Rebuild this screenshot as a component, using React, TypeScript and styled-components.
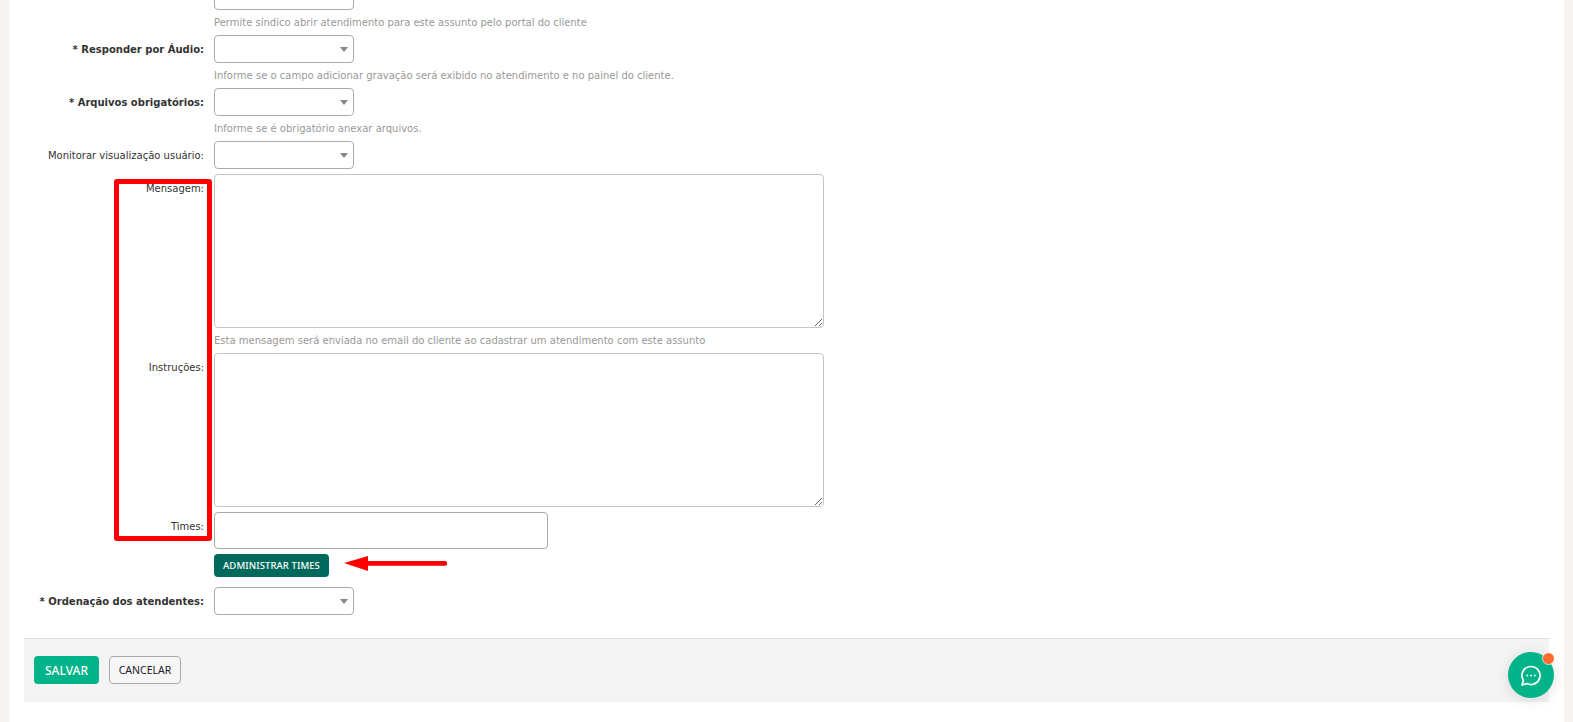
import React from "react";
import styled, { createGlobalStyle } from "styled-components";

const GlobalStyle = createGlobalStyle`
  html, body {
    margin: 0;
    padding: 0;
    height: 722px;
    overflow: hidden;
    background: #f6f3f1;
  }
`;

const Page = styled.div`
  position: relative;
  width: 1555px;
  height: 722px;
  margin-left: 9px;
  background: #fff;
  overflow: hidden;
  font-family: "DejaVu Sans", Verdana, sans-serif;
`;

const Form = styled.div`
  display: flex;
  flex-direction: column;
  margin-top: -18px;
`;

const Row = styled.div<{ $gap?: number }>`
  display: flex;
  align-items: flex-start;
  margin-bottom: ${(p) => p.$gap ?? 0}px;
`;

const Label = styled.label<{ $required?: boolean; $top?: number }>`
  width: 205px;
  flex: none;
  padding-top: ${(p) => p.$top ?? 8}px;
  padding-right: 10px;
  box-sizing: border-box;
  text-align: right;
  font-size: 10px;
  line-height: 13px;
  white-space: nowrap;
  color: #333;
  font-weight: ${(p) => (p.$required ? 700 : 400)};
`;

const Field = styled.div`
  display: flex;
  flex-direction: column;
  align-items: flex-start;
`;

const Select = styled.div`
  position: relative;
  width: 140px;
  height: 28px;
  box-sizing: border-box;
  border: 1px solid #aaa;
  border-radius: 4px;
  background: #fff;

  &::after {
    content: "";
    position: absolute;
    right: 5px;
    top: 11px;
    border-left: 4.5px solid transparent;
    border-right: 4.5px solid transparent;
    border-top: 5px solid #888;
  }
`;

const Help = styled.div`
  height: 25px;
  line-height: 25px;
  font-size: 10px;
  color: #999;
  white-space: nowrap;
`;

const TextArea = styled.textarea`
  display: block;
  width: 610px;
  height: 154px;
  margin: 0;
  padding: 0;
  box-sizing: border-box;
  border: 1px solid #c4c4c4;
  border-radius: 4px;
  background: #fff;
  outline: none;
`;

const TagsInput = styled.div`
  width: 334px;
  height: 37px;
  box-sizing: border-box;
  border: 1px solid #aaa;
  border-radius: 4px;
  background: #fff;
`;

const TealButton = styled.button`
  width: 115px;
  height: 23px;
  margin: 5px 0 10px;
  padding: 0;
  border: 0;
  border-radius: 4px;
  background: #00695c;
  color: #fff;
  font-family: "Noto Sans", sans-serif;
  font-size: 9.5px;
  font-weight: 500;
  letter-spacing: 0.1px;
`;

const Footer = styled.div`
  display: flex;
  align-items: flex-start;
  gap: 10px;
  margin: 23px 0 0 15px;
  width: 1525px;
  height: 64px;
  box-sizing: border-box;
  padding: 17px 10px 0;
  border-top: 1px solid #ddd;
  background: #f4f4f4;
`;

const SaveButton = styled.button`
  width: 65px;
  height: 28px;
  padding: 0;
  border: 0;
  border-radius: 4px;
  background: #00b388;
  color: #fff;
  font-family: "Noto Sans", sans-serif;
  font-size: 12px;
  font-weight: 500;
`;

const CancelButton = styled.button`
  width: 72px;
  height: 28px;
  padding: 0;
  box-sizing: border-box;
  border: 1px solid #aaa;
  border-radius: 4px;
  background: #f6f6f8;
  color: #222;
  font-family: "Noto Sans", sans-serif;
  font-size: 10.5px;
`;

/* annotations drawn over the form */
const RedBox = styled.div`
  position: absolute;
  left: 105px;
  top: 179px;
  width: 98px;
  height: 362px;
  box-sizing: border-box;
  border: 5px solid #ff0000;
  border-radius: 3px;
`;

const Arrow = styled.svg`
  position: absolute;
  left: 334px;
  top: 555px;
`;

const ChatBubble = styled.div`
  position: absolute;
  left: 1499px;
  top: 652px;
  width: 46px;
  height: 46px;
  display: flex;
  align-items: center;
  justify-content: center;
  border-radius: 50%;
  background: #00b388;
  box-shadow: 0 2px 14px rgba(0, 0, 0, 0.12);

  svg {
    margin-top: 2px;
  }
`;

const ChatDot = styled.span`
  position: absolute;
  right: 0;
  top: 1px;
  width: 11px;
  height: 11px;
  border-radius: 50%;
  background: #ff6b2c;
  box-shadow: 0 0 0 1px rgba(255, 255, 255, 0.7);
`;

export default function App() {
  return (
    <Page>
      <GlobalStyle />
      <Form>
        <Row>
          <Label />
          <Field>
            <Select />
            <Help>Permite síndico abrir atendimento para este assunto pelo portal do cliente</Help>
          </Field>
        </Row>
        <Row>
          <Label $required>* Responder por Áudio:</Label>
          <Field>
            <Select />
            <Help>Informe se o campo adicionar gravação será exibido no atendimento e no painel do cliente.</Help>
          </Field>
        </Row>
        <Row>
          <Label $required>* Arquivos obrigatórios:</Label>
          <Field>
            <Select />
            <Help>Informe se é obrigatório anexar arquivos.</Help>
          </Field>
        </Row>
        <Row $gap={5}>
          <Label>Monitorar visualização usuário:</Label>
          <Field>
            <Select />
          </Field>
        </Row>
        <Row>
          <Label>Mensagem:</Label>
          <Field>
            <TextArea />
            <Help>Esta mensagem será enviada no email do cliente ao cadastrar um atendimento com este assunto</Help>
          </Field>
        </Row>
        <Row $gap={5}>
          <Label>Instruções:</Label>
          <Field>
            <TextArea />
          </Field>
        </Row>
        <Row>
          <Label>Times:</Label>
          <Field>
            <TagsInput />
            <TealButton>ADMINISTRAR TIMES</TealButton>
          </Field>
        </Row>
        <Row>
          <Label $required>* Ordenação dos atendentes:</Label>
          <Field>
            <Select />
          </Field>
        </Row>
      </Form>
      <Footer>
        <SaveButton>SALVAR</SaveButton>
        <CancelButton>CANCELAR</CancelButton>
      </Footer>
      <RedBox />
      <Arrow width="104" height="17" viewBox="0 0 104 17">
        <path d="M1 8 L25 1 L25 6 L102 6 A2.3 2.3 0 0 1 102 10.7 L25 10.7 L25 16 Z" fill="#ff0000" />
      </Arrow>
      <ChatBubble>
        <svg width="22" height="22" viewBox="0 0 22 22" fill="none">
          <path
            d="M11 1.5a9 9 0 1 1-3.9 17.1L2 20l1.4-4.6A9 9 0 0 1 11 1.5Z"
            stroke="#fff"
            strokeWidth="1.7"
            strokeLinejoin="round"
          />
          <circle cx="7.2" cy="10.6" r="1" fill="#fff" />
          <circle cx="11" cy="10.6" r="1" fill="#fff" />
          <circle cx="14.8" cy="10.6" r="1" fill="#fff" />
        </svg>
        <ChatDot />
      </ChatBubble>
    </Page>
  );
}
